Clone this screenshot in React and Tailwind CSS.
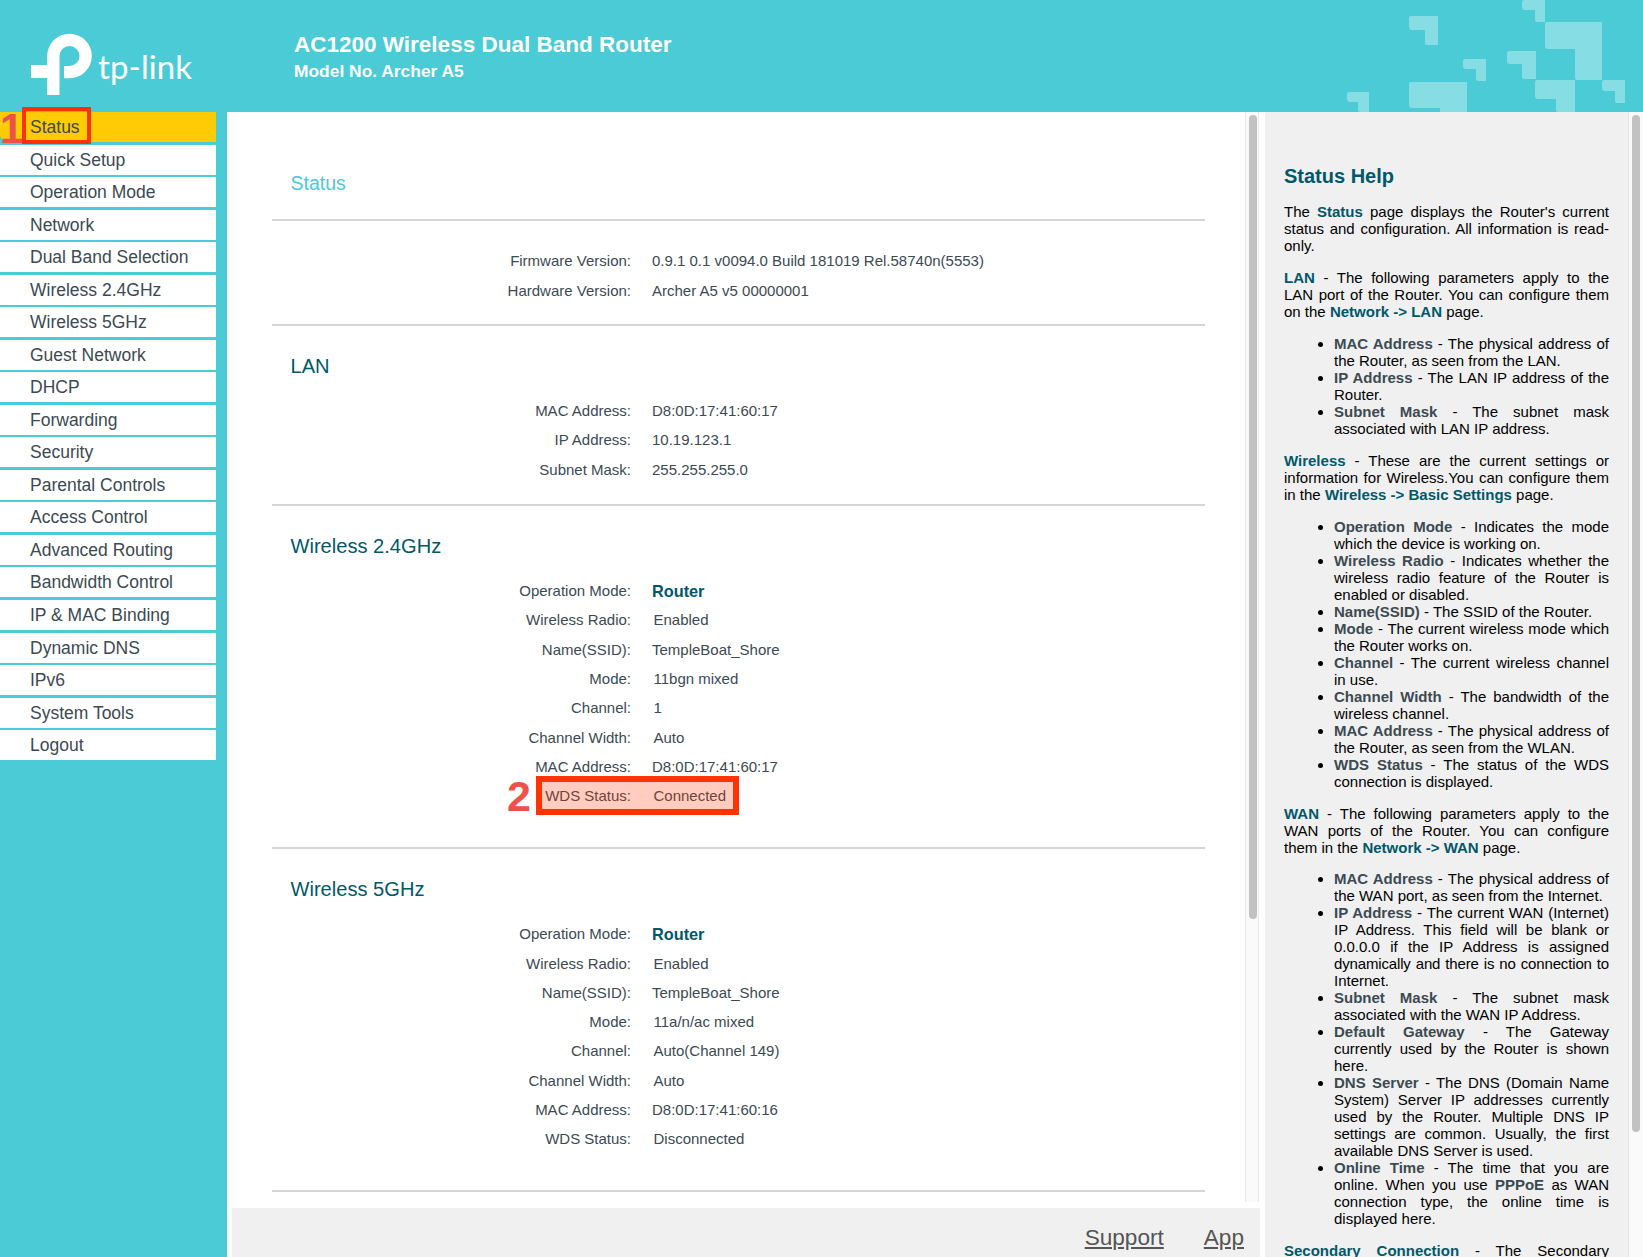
import React from "react";

const menu = ["Status","Quick Setup","Operation Mode","Network","Dual Band Selection","Wireless 2.4GHz","Wireless 5GHz","Guest Network","DHCP","Forwarding","Security","Parental Controls","Access Control","Advanced Routing","Bandwidth Control","IP & MAC Binding","Dynamic DNS","IPv6","System Tools","Logout"];

// label, value, bold, value sits a bit further right
const w24 = [
  ["Operation Mode:", "Router", true],
  ["Wireless Radio:", "Enabled", false, true],
  ["Name(SSID):", "TempleBoat_Shore"],
  ["Mode:", "11bgn mixed", false, true],
  ["Channel:", "1", false, true],
  ["Channel Width:", "Auto", false, true],
  ["MAC Address:", "D8:0D:17:41:60:17"],
  ["WDS Status:", "Connected", false, true],
];
const w5 = [
  ["Operation Mode:", "Router", true],
  ["Wireless Radio:", "Enabled", false, true],
  ["Name(SSID):", "TempleBoat_Shore"],
  ["Mode:", "11a/n/ac mixed", false, true],
  ["Channel:", "Auto(Channel 149)", false, true],
  ["Channel Width:", "Auto", false, true],
  ["MAC Address:", "D8:0D:17:41:60:16"],
  ["WDS Status:", "Disconnected", false, true],
];

// x, y, w, h, start of the vertical arm, bottom of the horizontal arm
const squares = [
  [1409, 16, 29, 29, 1425, 30],
  [1522, 0, 23, 22, 1535, 10],
  [1545, 22, 57, 58, 1575, 49],
  [1463, 59, 23, 22, 1476, 69],
  [1507, 51, 29, 28, 1522, 64],
  [1535, 80, 40, 32, 1556, 99],
  [1602, 80, 23, 23, 1615, 91],
  [1409, 82, 58, 34, 1440, 108],
  [1347, 92, 22, 20, 1358, 102],
];

function Row({ label, value, strong, nudge }) {
  return (
    <div className="flex h-[29.34px] items-center text-[15px] text-[#3c4a52]">
      <div className="w-[359px] text-right">{label}</div>
      {strong ? (
        <div className="ml-[21px] text-[16.3px] font-bold text-[#00586a]">{value}</div>
      ) : (
        <div className={nudge ? "ml-[22.5px]" : "ml-[21px]"}>{value}</div>
      )}
    </div>
  );
}

function Section({ title, rows, wireless }) {
  return (
    <div>
      <div className="pl-[18.5px] pt-[25px] text-[20.1px] leading-[30px] text-[#00586a]">{title}</div>
      <div className="mt-[16px]">
        {rows.map((r) => (
          <Row key={r[0]} label={r[0]} value={r[1]} strong={r[2]} nudge={r[3]} />
        ))}
      </div>
      <div className={(wireless ? "mt-[35.5px]" : "mt-[19px]") + " h-[2px] bg-[#d5d5d5]"} />
    </div>
  );
}

const B = ({ children }) => <b className="font-bold text-[#00586a]">{children}</b>;
const G = ({ children }) => <b className="font-bold text-[#3c4a52]">{children}</b>;

function Squares() {
  return (
    <svg width="1643" height="112" viewBox="0 0 1643 112" className="absolute left-0 top-0">
      {squares.map(([x, y, w, h, ax, ay]) => (
        <path
          key={x + "-" + y}
          fill="#87dde4"
          d={`M${x + 2} ${y}H${x + w}V${y + h}H${ax + 2}Q${ax} ${y + h} ${ax} ${y + h - 2}V${ay}H${x + 3}Q${x} ${ay} ${x} ${ay - 3}V${y + 2}Q${x} ${y} ${x + 2} ${y}Z`}
        />
      ))}
    </svg>
  );
}

function Logo() {
  return (
    <div className="flex items-end">
      <svg width="62" height="62" viewBox="0 0 62 62" className="ml-[31px] mt-[33px]">
        <path fill="#fff" d="M0 32H16.2V23A22.3 22.3 0 1 1 38.5 45.3H33V33H38.5A10 10 0 1 0 28.5 23V62H16.2V45H0Z" />
      </svg>
      <div className="mb-[9px] ml-[5px] font-['Lato','Liberation_Sans',sans-serif] text-[33px] font-normal leading-[40px] tracking-[0.1px] text-white">tp-link</div>
    </div>
  );
}

export default function App() {
  return (
    <div className="flex h-[1257px] w-[1643px] flex-col overflow-hidden bg-white font-['Liberation_Sans',Arial,sans-serif]">
      <header className="relative flex h-[112px] shrink-0 overflow-hidden bg-[#4acbd6]">
        <Squares />
        <div className="relative w-[294px] shrink-0"><Logo /></div>
        <div className="relative pt-[30px] text-white">
          <div className="text-[22.5px] font-bold leading-[30px]">AC1200 Wireless Dual Band Router</div>
          <div className="text-[17.4px] font-bold leading-[22px]">Model No. Archer A5</div>
        </div>
      </header>

      <div className="flex min-h-0 flex-1">
        {/* left menu */}
        <nav className="relative w-[227px] shrink-0 bg-[#4acbd6]">
          <ul className="flex w-[216px] flex-col gap-[2.54px]">
            {menu.map((m, i) => (
              <li key={m} className={"h-[30px] pl-[30px] text-[17.5px] leading-[30px] text-[#3c4a52] " + (i === 0 ? "rounded-bl-[8px] bg-[#ffcb05]" : "bg-white")}>{m}</li>
            ))}
          </ul>
          <div className="absolute left-[22px] top-[-5px] h-[37px] w-[69px] border-[4px] border-[#ff3300]" />
          <div className="absolute left-0 top-[-7px] text-[42px] font-bold leading-[48px] text-[#f0504a]">1</div>
        </nav>

        {/* main frame */}
        <main className="relative w-[1033px] shrink-0 overflow-hidden">
          <div className="ml-[45px] w-[933px] pt-[56px]">
            <div className="pl-[18.5px] text-[19.5px] leading-[30px] text-[#4acbd6]">Status</div>
            <div className="mt-[21px] h-[2px] bg-[#d5d5d5]" />
            <div className="mt-[26px]">
              <Row label="Firmware Version:" value="0.9.1 0.1 v0094.0 Build 181019 Rel.58740n(5553)" />
              <Row label="Hardware Version:" value="Archer A5 v5 00000001" />
            </div>
            <div className="mt-[18px] h-[2px] bg-[#d5d5d5]" />
            <Section title="LAN" rows={[["MAC Address:", "D8:0D:17:41:60:17"], ["IP Address:", "10.19.123.1"], ["Subnet Mask:", "255.255.255.0"]]} />
            <Section title="Wireless 2.4GHz" rows={w24} wireless />
            <Section title="Wireless 5GHz" rows={w5} wireless />
          </div>
          {/* WDS highlight */}
          <div className="absolute left-[309px] top-[664px] h-[39px] w-[203px] border-[6px] border-[#ff3300] bg-[#ff330040]" />
          <div className="absolute left-[280px] top-[660px] text-[43px] font-bold leading-[48px] text-[#f0504a]">2</div>
          {/* scrollbar */}
          <div className="absolute bottom-[55px] left-[1018px] top-0 w-[14px] border-x border-[#e8e8e8] bg-[#fafafa]" />
          <div className="absolute left-[1022px] top-[3px] h-[804px] w-[8px] rounded-full bg-[#c2c2c2]" />
          {/* footer */}
          <div className="absolute bottom-0 left-[5px] right-0 flex h-[49px] justify-end gap-[40px] bg-[#f0f0f0] pr-[16px] pt-[16px] text-[22.6px] leading-[28px] text-[#555] underline">
            <span>Support</span>
            <span>App</span>
          </div>
        </main>

        {/* help frame */}
        <aside className="relative flex-1 overflow-hidden">
          <div className="ml-[5px] h-full w-[364px] overflow-hidden border-r border-[#e4e4e4] bg-[#f0f0f0] pl-[19px] pr-[19px] pt-[52px] text-justify text-[15px] leading-[17px] text-black">
            <h2 className="text-left text-[20px] font-bold leading-[24px] text-[#00586a]">Status Help</h2>
            <p className="mt-[15px]">The <B>Status</B> page displays the Router's current status and configuration. All information is read-only.</p>
            <p className="mt-[14.8px]"><B>LAN</B> - The following parameters apply to the LAN port of the Router. You can configure them on the <B>Network -&gt; LAN</B> page.</p>
            <ul className="mt-[14.8px] list-disc pl-[50px]">
              <li><G>MAC Address</G> - The physical address of the Router, as seen from the LAN.</li>
              <li><G>IP Address</G> - The LAN IP address of the Router.</li>
              <li><G>Subnet Mask</G> - The subnet mask associated with LAN IP address.</li>
            </ul>
            <p className="mt-[15.4px]"><B>Wireless</B> - These are the current settings or information for Wireless.You can configure them in the <B>Wireless -&gt; Basic Settings</B> page.</p>
            <ul className="mt-[14.8px] list-disc pl-[50px]">
              <li><G>Operation Mode</G> - Indicates the mode which the device is working on.</li>
              <li><G>Wireless Radio</G> - Indicates whether the wireless radio feature of the Router is enabled or disabled.</li>
              <li><G>Name(SSID)</G> - The SSID of the Router.</li>
              <li><G>Mode</G> - The current wireless mode which the Router works on.</li>
              <li><G>Channel</G> - The current wireless channel in use.</li>
              <li><G>Channel Width</G> - The bandwidth of the wireless channel.</li>
              <li><G>MAC Address</G> - The physical address of the Router, as seen from the WLAN.</li>
              <li><G>WDS Status</G> - The status of the WDS connection is displayed.</li>
            </ul>
            <p className="mt-[14.8px]"><B>WAN</B> - The following parameters apply to the WAN ports of the Router. You can configure them in the <B>Network -&gt; WAN</B> page.</p>
            <ul className="mt-[14.8px] list-disc pl-[50px]">
              <li><G>MAC Address</G> - The physical address of the WAN port, as seen from the Internet.</li>
              <li><G>IP Address</G> - The current WAN (Internet) IP Address. This field will be blank or 0.0.0.0 if the IP Address is assigned <span className="tracking-[-0.15px]">dynamically and there is no connection to</span> Internet.</li>
              <li><G>Subnet Mask</G> - The subnet mask associated with the WAN IP Address.</li>
              <li><G>Default Gateway</G> - The Gateway currently used by the Router is shown here.</li>
              <li><G>DNS Server</G> - The DNS (Domain Name System) Server IP addresses currently used by the Router. Multiple DNS IP settings are common. Usually, the first available DNS Server is used.</li>
              <li><G>Online Time</G> - The time that you are online. When you use <G>PPPoE</G> as WAN connection type, the online time is displayed here.</li>
            </ul>
            <p className="mt-[14.2px]"><B>Secondary Connection</B> - The Secondary Connection is displayed here.</p>
          </div>
          <div className="absolute left-[369px] top-0 h-full w-[14px] bg-[#fafafa]" />
          <div className="absolute left-[372px] top-[3px] h-[1017px] w-[8px] rounded-full bg-[#c2c2c2]" />
        </aside>
      </div>
    </div>
  );
}
